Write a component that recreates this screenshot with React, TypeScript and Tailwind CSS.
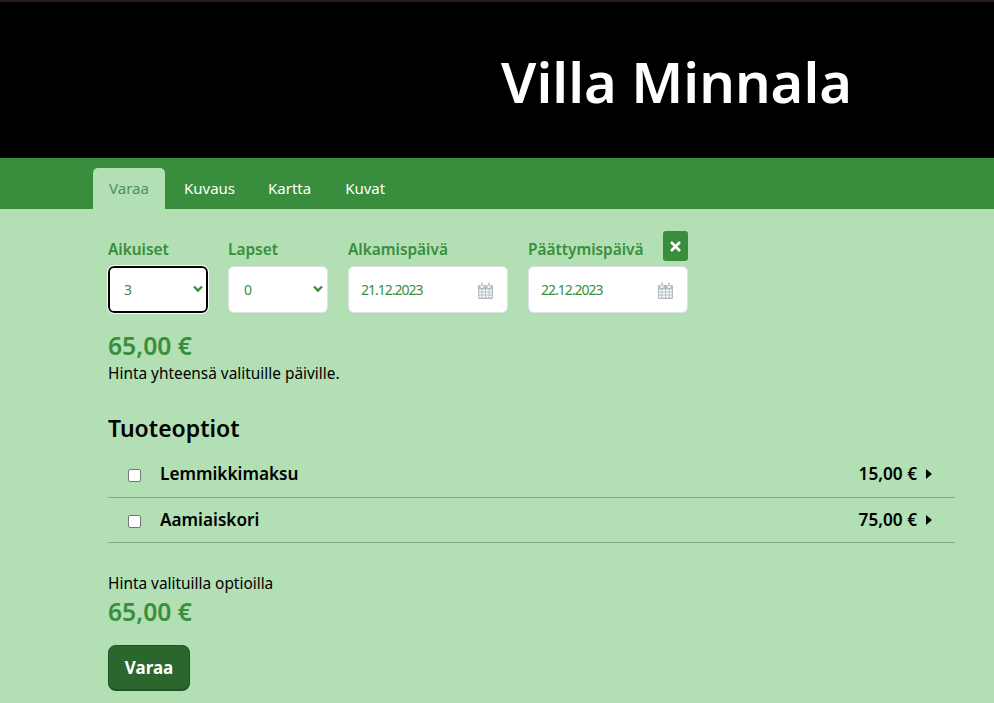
import React from "react";

function Chevron() {
  return (
    <svg className="pointer-events-none absolute right-[4px] top-[18px] h-[10px] w-[12px] text-[#388e3c]" viewBox="0 0 12 10" fill="none">
      <path d="M2 2.5 L6 6.5 L10 2.5" stroke="currentColor" strokeWidth="2.4" />
    </svg>
  );
}

function Calendar() {
  return (
    <svg className="absolute right-[14px] top-[15px] h-[17px] w-[15px] text-[#b0bec5]" viewBox="0 0 15 17" fill="currentColor">
      <path fillRule="evenodd" d="M1 3h1.5v1.5a1.5 1.5 0 0 0 3 0V3h4v1.5a1.5 1.5 0 0 0 3 0V3H14a1 1 0 0 1 1 1v12a1 1 0 0 1-1 1H1a1 1 0 0 1-1-1V4a1 1 0 0 1 1-1Zm.2 4.6v2h2.2v-2Zm3.2 0v2h2.6v-2Zm3.6 0v2h2.6v-2Zm3.6 0v2h2.2v-2Zm-10.400 3v2h2.200v-2Zm3.200 0v2h2.600v-2Zm3.600 0v2h2.600v-2Zm3.600 0v2h2.200v-2Zm-10.400 3v2h2.200v-2Zm3.200 0v2h2.600v-2Zm3.600 0v2h2.600v-2Zm3.600 0v2h2.200v-2Z" />
      <rect x="3.300" y="0.500" width="1.500" height="4" rx="0.700" />
      <rect x="10.300" y="0.500" width="1.500" height="4" rx="0.700" />
    </svg>
  );
}

function SelectField({ label, value, options, focused }: { label: string; value: string; options: string[]; focused?: boolean }) {
  return (
    <div className="flex w-[100px] flex-col">
      <label className="mb-[7px] h-[18px] text-[15.400px] leading-[18px] font-semibold text-[#388e3c]">{label}</label>
      <div className="relative h-[47px]">
        <select
          defaultValue={value}
          className={
            focused
              ? "h-full w-full appearance-none rounded-[6px] border-2 border-black bg-white pl-[14px] text-[14px] text-[#388e3c] outline-1 outline-white"
              : "h-full w-full appearance-none rounded-[6px] border border-[#dee2e6] bg-white pl-[15px] text-[14px] text-[#388e3c]"
          }
        >
          {options.map((o) => (
            <option key={o}>{o}</option>
          ))}
        </select>
        <Chevron />
      </div>
    </div>
  );
}

function DateField({ label, value }: { label: string; value: string }) {
  return (
    <div className="flex w-[160px] flex-col">
      <label className="mb-[7px] h-[18px] text-[15.400px] leading-[18px] font-semibold whitespace-nowrap text-[#388e3c]">{label}</label>
      <div className="relative flex h-[47px] items-center rounded-[6px] border border-[#dee2e6] bg-white pl-[12px] text-[14px] tracking-[-1px] text-[#388e3c]">
        {value}
        <Calendar />
      </div>
    </div>
  );
}

function Option({ name, price, tall }: { name: string; price: string; tall?: boolean }) {
  return (
    <div className={tall ? "flex h-[47px] items-center border-b border-[#86a887] pr-[23px] pl-[20px]" : "flex h-[45px] items-center border-b border-[#86a887] pr-[23px] pl-[20px]"}>
      <input type="checkbox" className="mt-[3px] h-[13px] w-[13px] appearance-none rounded-[2px] border border-[#767676] bg-white" />
      <span className="ml-[19px] text-[17.200px] font-semibold text-black">{name}</span>
      <span className="ml-auto text-[17.200px] font-semibold text-black">{price}</span>
      <svg className="ml-[9px] h-[10px] w-[6px]" viewBox="0 0 6 10" fill="black">
        <path d="M0 0 L6 5 L0 10 Z" />
      </svg>
    </div>
  );
}

export default function App() {
  return (
    <div className="h-[703px] overflow-hidden bg-[#b2dfb3] font-['Noto_Sans',sans-serif]">
      <header className="h-[158px] border-t-2 border-[#2a1a20] bg-black pr-[142px] text-right">
        <h1 className="pt-[41px] text-[56px] leading-[76px] font-semibold text-white">Villa Minnala</h1>
      </header>
      <nav className="flex h-[51px] items-end bg-[#388e3c] pl-[93px] text-[15px] text-white">
        <a className="mr-[2px] flex h-[41px] w-[72px] items-center justify-center rounded-t-[5px] bg-[#b2dfb3] text-[#4f9053]">Varaa</a>
        <a className="flex h-[41px] items-center pr-[16px] pl-[17px]">Kuvaus</a>
        <a className="flex h-[41px] items-center px-[17px]">Kartta</a>
        <a className="flex h-[41px] items-center px-[17px]">Kuvat</a>
      </nav>
      <main className="px-[108px] pr-[39px] pt-[32px]">
        <div className="relative flex w-[580px] gap-[20px]">
          <SelectField label="Aikuiset" value="3" options={["0", "1", "2", "3", "4"]} focused />
          <SelectField label="Lapset" value="0" options={["0", "1", "2", "3"]} />
          <DateField label="Alkamispäivä" value="21.12.2023" />
          <DateField label="Päättymispäivä" value="22.12.2023" />
          <button className="absolute top-[-10px] right-0 flex h-[30px] w-[25px] items-center justify-center rounded-[3px] bg-[#388e3c]">
            <svg className="h-[11px] w-[11px]" viewBox="0 0 11 11" stroke="white" strokeWidth="2.600">
              <path d="M1 1 L10 10 M10 1 L1 10" />
            </svg>
          </button>
        </div>
        <div className="mt-[17px] h-[32px] text-[24.700px] leading-[32px] font-semibold text-[#388e3c]">65,00 €</div>
        <p className="mt-[1px] text-[15.400px] leading-[22px] text-black">Hinta yhteensä valituille päiville.</p>
        <h2 className="mt-[28px] text-[23px] leading-[30px] font-semibold text-black">Tuoteoptiot</h2>
        <div className="mt-[8px]">
          <Option name="Lemmikkimaksu" price="15,00 €" tall />
          <Option name="Aamiaiskori" price="75,00 €" />
        </div>
        <p className="mt-[30px] text-[15.400px] leading-[22px] text-black">Hinta valituilla optioilla</p>
        <div className="mt-[1px] h-[32px] text-[24.700px] leading-[32px] font-semibold text-[#388e3c]">65,00 €</div>
        <button className="mt-[17px] h-[46px] w-[82px] rounded-[8px] border border-[#1f5122] border-b-2 bg-[#2b672d] text-[17px] font-bold text-white">Varaa</button>
      </main>
    </div>
  );
}
